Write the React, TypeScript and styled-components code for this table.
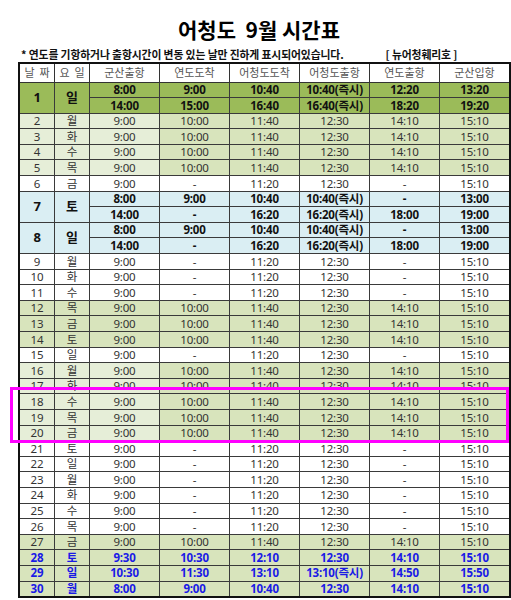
import styled, { createGlobalStyle } from 'styled-components';

const GlobalStyle = createGlobalStyle`
  html, body {
    margin: 0;
    padding: 0;
    background: #ffffff;
  }
`;

type Kind = 'olive' | 'green' | 'split' | 'white' | 'aqua' | 'blue';

type DayRow = {
  day: number;
  dow: string;
  kind: Kind;
  times: string[][];
};

const WEEK = ['9:00', '10:00', '11:40', '12:30', '14:10', '15:10'];
const SHORT = ['9:00', '-', '11:20', '12:30', '-', '15:10'];
const AQUA = [
  ['8:00', '9:00', '10:40', '10:40(즉시)', '-', '13:00'],
  ['14:00', '-', '16:20', '16:20(즉시)', '18:00', '19:00'],
];

const ROWS: DayRow[] = [
  {
    day: 1, dow: '일', kind: 'olive', times: [
      ['8:00', '9:00', '10:40', '10:40(즉시)', '12:20', '13:20'],
      ['14:00', '15:00', '16:40', '16:40(즉시)', '18:20', '19:20'],
    ],
  },
  { day: 2, dow: '월', kind: 'split', times: [WEEK] },
  { day: 3, dow: '화', kind: 'split', times: [WEEK] },
  { day: 4, dow: '수', kind: 'split', times: [WEEK] },
  { day: 5, dow: '목', kind: 'split', times: [WEEK] },
  { day: 6, dow: '금', kind: 'white', times: [SHORT] },
  { day: 7, dow: '토', kind: 'aqua', times: AQUA },
  { day: 8, dow: '일', kind: 'aqua', times: AQUA },
  { day: 9, dow: '월', kind: 'white', times: [SHORT] },
  { day: 10, dow: '화', kind: 'white', times: [SHORT] },
  { day: 11, dow: '수', kind: 'white', times: [SHORT] },
  { day: 12, dow: '목', kind: 'green', times: [WEEK] },
  { day: 13, dow: '금', kind: 'green', times: [WEEK] },
  { day: 14, dow: '토', kind: 'green', times: [WEEK] },
  { day: 15, dow: '일', kind: 'white', times: [SHORT] },
  { day: 16, dow: '월', kind: 'split', times: [WEEK] },
  { day: 17, dow: '화', kind: 'split', times: [WEEK] },
  { day: 18, dow: '수', kind: 'split', times: [WEEK] },
  { day: 19, dow: '목', kind: 'split', times: [WEEK] },
  { day: 20, dow: '금', kind: 'split', times: [WEEK] },
  { day: 21, dow: '토', kind: 'white', times: [SHORT] },
  { day: 22, dow: '일', kind: 'white', times: [SHORT] },
  { day: 23, dow: '월', kind: 'white', times: [SHORT] },
  { day: 24, dow: '화', kind: 'white', times: [SHORT] },
  { day: 25, dow: '수', kind: 'white', times: [SHORT] },
  { day: 26, dow: '목', kind: 'white', times: [SHORT] },
  { day: 27, dow: '금', kind: 'green', times: [WEEK] },
  { day: 28, dow: '토', kind: 'blue', times: [['9:30', '10:30', '12:10', '12:30', '14:10', '15:10']] },
  { day: 29, dow: '일', kind: 'blue', times: [['10:30', '11:30', '13:10', '13:10(즉시)', '14:50', '15:50']] },
  { day: 30, dow: '월', kind: 'blue', times: [['8:00', '9:00', '10:40', '12:30', '14:10', '15:10']] },
];

const HEADS = ['군산출항', '연도도착', '어청도도착', '어청도출항', '연도출항', '군산입항'];

const Page = styled.div`
  position: relative;
  width: 511px;
  height: 600px;
  padding: 18px 11px 0 18px;
  box-sizing: border-box;
  font-family: "Noto Sans", "Noto Sans CJK KR", sans-serif;
`;

const Title = styled.h1`
  margin: 0;
  width: 482px;
  text-align: center;
  font-family: "Noto Sans CJK KR", sans-serif;
  font-size: 21px;
  line-height: 23px;
  font-weight: 700;
  color: #000;
  white-space: pre;
`;

const NoteRow = styled.div`
  display: flex;
  align-items: center;
  height: 14px;
  margin-top: 6px;
  font-family: "Noto Sans CJK KR", sans-serif;
  font-size: 10.8px;
  font-weight: 700;
  color: #111;
  letter-spacing: -0.1px;
  white-space: nowrap;
`;

const Note = styled.span`
  margin-left: 3px;
`;

const ShipName = styled.span`
  margin-left: 42px;
`;

const Sheet = styled.table`
  margin-top: 1px;
  width: 482px;
  border-collapse: collapse;
  table-layout: fixed;
  border: 2px solid #111;
`;

const HeadRow = styled.tr`
  height: 19px;
`;

const BodyRow = styled.tr`
  height: 15.6px;
`;

const HeadCell = styled.th<{ $w: number }>`
  width: ${(p) => p.$w}px;
  padding: 0;
  border: 1px solid #333;
  background: #fff;
  color: #555;
  font-family: "Noto Sans CJK KR", sans-serif;
  font-size: 11px;
  font-weight: 400;
  line-height: 1;
  white-space: pre;
`;

const BG: Record<Kind, string> = {
  olive: '#9bbb59',
  green: '#d8e4bc',
  split: '#d8e4bc',
  white: '#ffffff',
  aqua: '#daeef3',
  blue: '#d8e4bc',
};

const Cell = styled.td<{ $kind: Kind; $light?: boolean; $big?: boolean }>`
  padding: 0;
  border: 1px solid #3a3a3a;
  text-align: center;
  line-height: 1;
  white-space: nowrap;
  overflow: hidden;
  background: ${(p) => (p.$light ? '#e6eed8' : BG[p.$kind])};
  font-size: ${(p) => (p.$big ? '13px' : '11.5px')};
  letter-spacing: -0.2px;
  font-weight: ${(p) => (p.$kind === 'olive' || p.$kind === 'aqua' || p.$kind === 'blue' ? 700 : 400)};
  color: ${(p) => (p.$kind === 'blue' ? '#1a1ae6' : p.$kind === 'olive' || p.$kind === 'aqua' ? '#111' : '#333')};
`;

const Highlight = styled.div`
  position: absolute;
  left: 10px;
  top: 387px;
  width: 499px;
  height: 56px;
  box-sizing: border-box;
  border: 3px solid #ff00ff;
  pointer-events: none;
`;

const DayRows = ({ row }: { row: DayRow }) => {
  const merged = row.times.length > 1;
  const light = row.kind === 'split';
  return (
    <>
      {row.times.map((times, i) => (
        <BodyRow key={i}>
          {i === 0 && (
            <>
              <Cell $kind={row.kind} $light={light} $big={merged} rowSpan={row.times.length}>
                {row.day}
              </Cell>
              <Cell $kind={row.kind} $light={light} $big={merged} rowSpan={row.times.length}>
                {row.dow}
              </Cell>
            </>
          )}
          {times.map((t, j) => (
            <Cell key={j} $kind={row.kind} $light={light && j === 0}>
              {t}
            </Cell>
          ))}
        </BodyRow>
      ))}
    </>
  );
};

export default function App() {
  return (
    <Page>
      <GlobalStyle />
      <Title>{'어청도  9월 시간표'}</Title>
      <NoteRow>
        <Note>* 연도를 기항하거나 출항시간이 변동 있는 날만 진하게 표시되어있습니다.</Note>
        <ShipName>[ 뉴어청훼리호 ]</ShipName>
      </NoteRow>
      <Sheet>
        <thead>
          <HeadRow>
            <HeadCell $w={34}>{'날  짜'}</HeadCell>
            <HeadCell $w={34}>{'요  일'}</HeadCell>
            {HEADS.map((h) => (
              <HeadCell key={h} $w={69}>{h}</HeadCell>
            ))}
          </HeadRow>
        </thead>
        <tbody>
          {ROWS.map((r) => (
            <DayRows key={r.day} row={r} />
          ))}
        </tbody>
      </Sheet>
      <Highlight />
    </Page>
  );
}
